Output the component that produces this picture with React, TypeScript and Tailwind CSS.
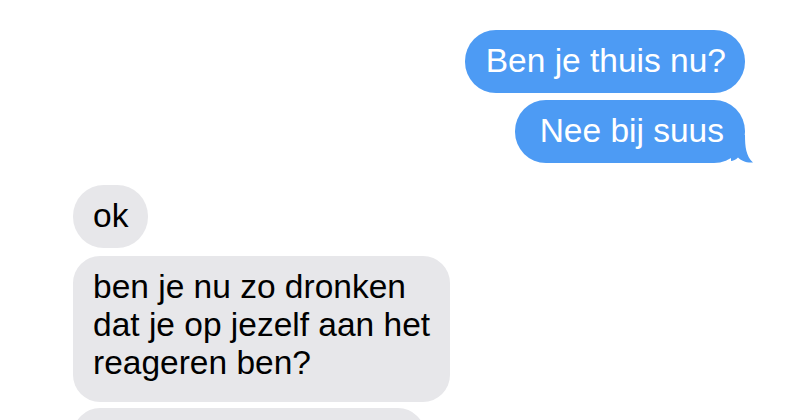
import React from "react";

const font = { fontFamily: '"Liberation Sans", Arial, Helvetica, sans-serif' };

function Tail() {
  return (
    <svg
      className="absolute right-[-8px] bottom-0"
      width="22"
      height="28"
      viewBox="0 0 22 28"
      fill="#4d9bf4"
    >
      <path d="M0 0 H14 C14 12 15 21 22 27.5 C15 28 10 25.5 7 22.5 C5 24.5 2 26 0 26 Z" />
    </svg>
  );
}

export default function App() {
  return (
    <div
      className="w-[800px] h-[420px] overflow-hidden bg-white flex flex-col pt-[30px] text-[33.5px] leading-[37px]"
      style={font}
    >
      <div className="flex flex-col items-end gap-[7px] pr-[55px]">
        <div className="bg-[#4d9bf4] text-white rounded-[31px] pl-[21px] pr-[19px] pt-3 pb-[14px]">
          Ben je thuis nu?
        </div>
        <div className="relative bg-[#4d9bf4] text-white rounded-[31px] pl-[25px] pr-[21px] pt-3 pb-[14px]">
          <span className="relative z-10">Nee bij suus</span>
          <Tail />
        </div>
      </div>

      <div className="flex flex-col items-start gap-[8px] pl-[73px] mt-[22px]">
        <div className="bg-[#e7e7ea] text-black rounded-[31px] px-5 pt-3 pb-[14px]">ok</div>
        <div className="bg-[#e7e7ea] text-black rounded-[27px] w-[377px] pl-5 pr-2 pt-3 pb-5 leading-[38px] whitespace-nowrap">
          ben je nu zo dronken
          <br />
          dat je op jezelf aan het
          <br />
          reageren ben?
        </div>
        <div className="bg-[#e7e7ea] rounded-[27px] w-[352px] h-[63px] mt-[-2px]" />
      </div>
    </div>
  );
}
